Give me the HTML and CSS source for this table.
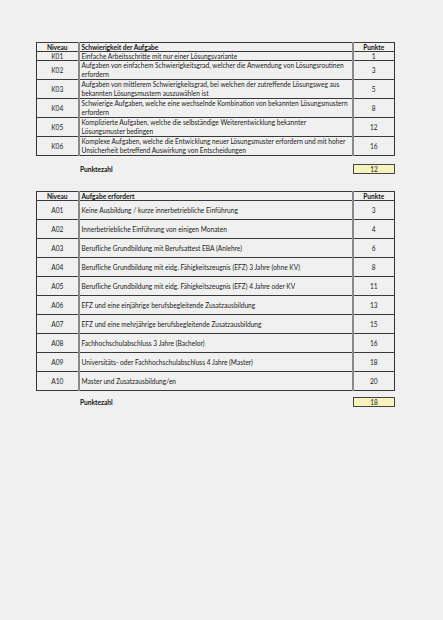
FILE: index.html
```html
<!DOCTYPE html>
<html lang="de">
<head>
<meta charset="utf-8">
<link rel="stylesheet" href="styles.css">
</head>
<body>
<div class="page">
  <table class="grid t1">
    <colgroup><col class="c-niv"><col class="c-desc"><col class="c-pt"></colgroup>
    <tr class="head"><th class="niv">Niveau</th><th class="desc">Schwierigkeit der Aufgabe</th><th class="pt">Punkte</th></tr>
    <tr class="one"><td class="niv">K01</td><td class="desc">Einfache Arbeitsschritte mit nur einer Lösungsvariante</td><td class="pt">1</td></tr>
    <tr><td class="niv">K02</td><td class="desc">Aufgaben von einfachem Schwierigkeitsgrad, welcher die Anwendung von Lösungsroutinen<br>erfordern</td><td class="pt">3</td></tr>
    <tr><td class="niv">K03</td><td class="desc">Aufgaben von mittlerem Schwierigkeitsgrad, bei welchen der zutreffende Lösungsweg aus<br>bekannten Lösungsmustern auszuwählen ist</td><td class="pt">5</td></tr>
    <tr><td class="niv">K04</td><td class="desc">Schwierige Aufgaben, welche eine wechselnde Kombination von bekannten Lösungsmustern<br>erfordern</td><td class="pt">8</td></tr>
    <tr><td class="niv">K05</td><td class="desc">Komplizierte Aufgaben, welche die selbständige Weiterentwicklung bekannter<br>Lösungsmuster bedingen</td><td class="pt">12</td></tr>
    <tr><td class="niv">K06</td><td class="desc">Komplexe Aufgaben, welche die Entwicklung neuer Lösungsmuster erfordern und mit hoher<br>Unsicherheit betreffend Auswirkung von Entscheidungen</td><td class="pt">16</td></tr>
  </table>
  <div class="total total1"><span class="label">Punktezahl</span><span class="box">12</span></div>

  <table class="grid t2">
    <colgroup><col class="c-niv"><col class="c-desc"><col class="c-pt"></colgroup>
    <tr class="head"><th class="niv">Niveau</th><th class="desc">Aufgabe erfordert</th><th class="pt">Punkte</th></tr>
    <tr><td class="niv">A01</td><td class="desc">Keine Ausbildung / kurze innerbetriebliche Einführung</td><td class="pt">3</td></tr>
    <tr><td class="niv">A02</td><td class="desc">Innerbetriebliche Einführung von einigen Monaten</td><td class="pt">4</td></tr>
    <tr><td class="niv">A03</td><td class="desc">Berufliche Grundbildung mit Berufsattest EBA (Anlehre)</td><td class="pt">6</td></tr>
    <tr><td class="niv">A04</td><td class="desc">Berufliche Grundbildung mit eidg. Fähigkeitszeugnis (EFZ) 3 Jahre (ohne KV)</td><td class="pt">8</td></tr>
    <tr><td class="niv">A05</td><td class="desc">Berufliche Grundbildung mit eidg. Fähigkeitszeugnis (EFZ) 4 Jahre oder KV</td><td class="pt">11</td></tr>
    <tr><td class="niv">A06</td><td class="desc">EFZ und eine einjährige berufsbegleitende Zusatzausbildung</td><td class="pt">13</td></tr>
    <tr><td class="niv">A07</td><td class="desc">EFZ und eine mehrjährige berufsbegleitende Zusatzausbildung</td><td class="pt">15</td></tr>
    <tr><td class="niv">A08</td><td class="desc">Fachhochschulabschluss 3 Jahre (Bachelor)</td><td class="pt">16</td></tr>
    <tr><td class="niv">A09</td><td class="desc">Universitäts- oder Fachhochschulabschluss 4 Jahre (Master)</td><td class="pt">18</td></tr>
    <tr><td class="niv">A10</td><td class="desc">Master und Zusatzausbildung/en</td><td class="pt">20</td></tr>
  </table>
  <div class="total total2"><span class="label">Punktezahl</span><span class="box">18</span></div>
</div>
</body>
</html>
```
FILE: styles.css
```css
html, body {
  margin: 0;
  padding: 0;
  background: #f0f0f0;
}
body {
  font-family: Lato, "Open Sans", sans-serif;
  font-size: 6.6px;
  color: #222;
}
.page {
  padding: 42px 0 0 36px;
  width: 359px;
}
.grid {
  width: 359px;
  border-collapse: collapse;
  table-layout: fixed;
  border: 1px solid #333;
}
.c-niv { width: 42px; }
.c-pt { width: 42px; }
.grid th, .grid td {
  padding: 0 1px;
  line-height: 9px;
  border-top: 1px solid #3a3a3a;
  border-bottom: 1px solid #3a3a3a;
  font-weight: normal;
  white-space: nowrap;
  overflow: hidden;
}
.grid th { font-weight: bold; color: #111; }
.grid .niv {
  text-align: center;
  vertical-align: middle;
  border-right: 2px solid #8a8a8a;
}
.grid .pt {
  text-align: center;
  vertical-align: middle;
  border-left: 2px solid #8a8a8a;
}
.grid .desc {
  text-align: left;
  vertical-align: top;
  padding-left: 2px;
}
.t1 td { height: 18px; }
.t1 .one td, .grid .head th {
  height: 8px;
  line-height: 8px;
}
.t2 td { height: 18px; }
.t2 .desc { vertical-align: middle; }
.total {
  display: flex;
  align-items: center;
  padding-left: 44px;
  line-height: 9px;
}
.total1 { margin-top: 8px; }
.total2 { margin-top: 6px; }
.total .label {
  font-weight: bold;
  color: #111;
  flex: 1;
}
.total .box {
  width: 40px;
  height: 8px;
  line-height: 8px;
  border: 1px solid #444;
  background: #f6f3bd;
  text-align: center;
}
.t2 { margin-top: 17px; }
```
